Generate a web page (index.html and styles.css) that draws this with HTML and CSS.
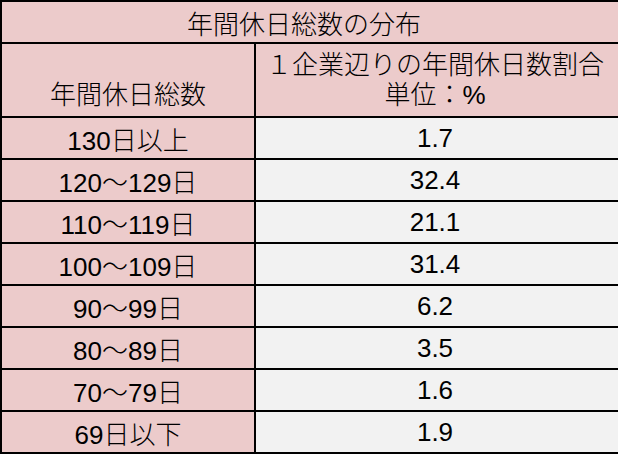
FILE: index.html
```html
<!DOCTYPE html>
<html lang="ja">
<head>
<meta charset="utf-8">
<title>年間休日総数の分布</title>
<link rel="stylesheet" href="styles.css">
</head>
<body>
<div class="table">
  <div class="cell title">年間休日総数の分布</div>
  <div class="cell head head-left">年間休日総数</div>
  <div class="cell head head-right"><span>１企業辺りの年間休日数割合</span><span>単位：%</span></div>
  <div class="cell label">130日以上</div><div class="cell value">1.7</div>
  <div class="cell label">120～129日</div><div class="cell value">32.4</div>
  <div class="cell label">110～119日</div><div class="cell value">21.1</div>
  <div class="cell label">100～109日</div><div class="cell value">31.4</div>
  <div class="cell label">90～99日</div><div class="cell value">6.2</div>
  <div class="cell label">80～89日</div><div class="cell value">3.5</div>
  <div class="cell label">70～79日</div><div class="cell value">1.6</div>
  <div class="cell label">69日以下</div><div class="cell value">1.9</div>
</div>
</body>
</html>
```
FILE: styles.css
```css
* { box-sizing: border-box; }
html, body { margin: 0; padding: 0; background: #ffffff; }
body { overflow: hidden; width: 618px; height: 456px; }
.table {
  display: grid;
  grid-template-columns: 256px 362px;
  border-top: 2px solid #000;
  width: 618px;
  font-family: "Liberation Sans", "Noto Sans CJK JP", sans-serif;
  font-size: 26px;
  font-weight: 300;
  color: #000;
}
.cell {
  border-bottom: 2px solid #000;
  height: 42px;
  display: flex;
  align-items: center;
  justify-content: center;
  white-space: nowrap;
}
.title {
  grid-column: 1 / 3;
  background: #eccbcb;
  border-left: 2px solid #000;
  padding-right: 12px;
}
.head { height: 74px; background: #eccbcb; line-height: 30px; }
.head-left {
  border-left: 2px solid #000;
  border-right: 2px solid #000;
  align-items: flex-end;
  padding-bottom: 6px;
}
.head-right {
  flex-direction: column;
  padding-right: 4px;
}
.label {
  background: #eccbcb;
  border-left: 2px solid #000;
  border-right: 2px solid #000;
}
.value {
  background: #f2f2f2;
  padding-right: 4px;
}
```
